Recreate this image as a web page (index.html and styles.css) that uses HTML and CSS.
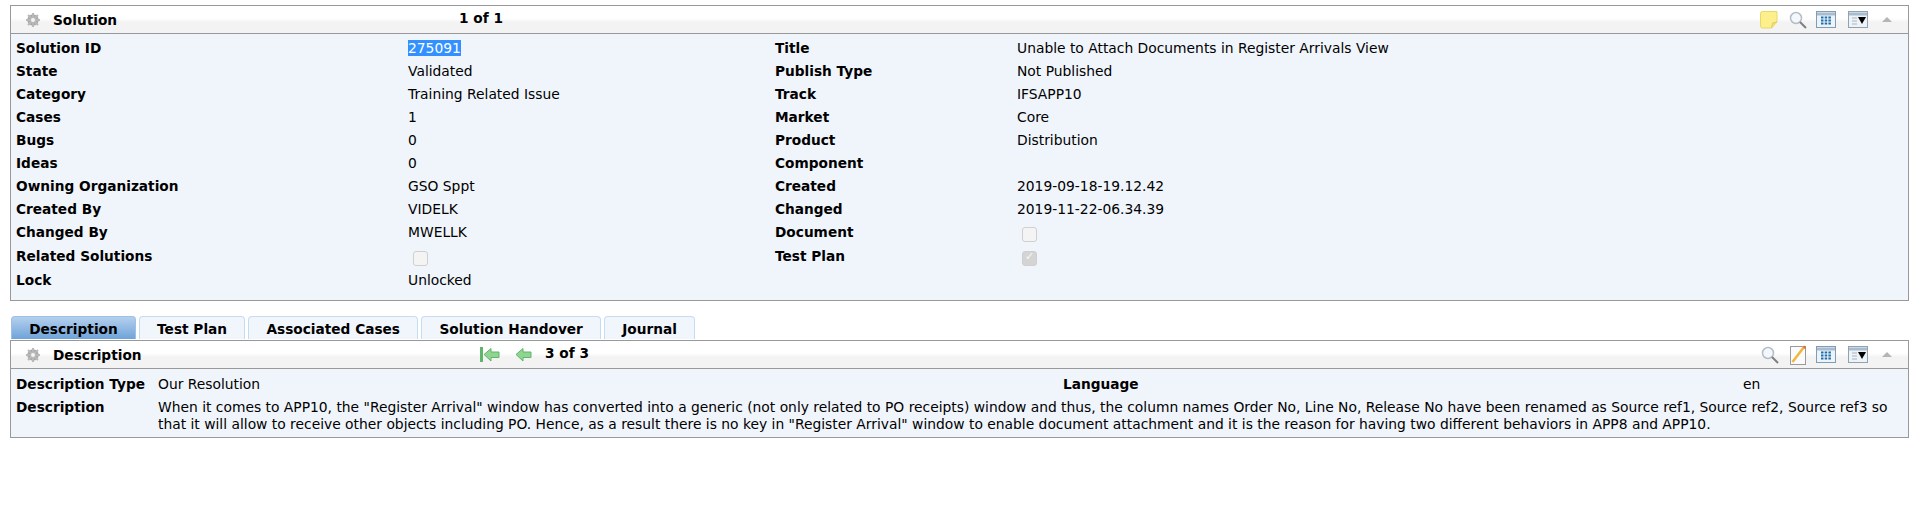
FILE: index.html
```html
<!DOCTYPE html>
<html>
<head>
    <title>Solution</title>
    <link rel="stylesheet" href="styles.css">
</head>
<body>
    <svg class="icon-defs" width="0" height="0">
        <defs>
            <g id="gear">
                <circle cx="7" cy="7" r="4.2" fill="none" stroke="#a8a8a8" stroke-width="3"/>
                <path d="M7 0v14M0 7h14M2 2l10 10M12 2L2 12" stroke="#b8b8b8" stroke-width="2"/>
                <circle cx="7" cy="7" r="2" fill="#f4f4f4"/>
            </g>
            <g id="search">
                <circle cx="7" cy="7" r="5.5" fill="#f4f8fc" stroke="#b4bcc6" stroke-width="1.5"/>
                <path d="M11 11l6 6" stroke="#7b7f85" stroke-width="2"/>
            </g>
            <g id="table">
                <rect x=".5" y=".5" width="19" height="16" fill="#eef3f8" stroke="#7f9db9"/>
                <path d="M1 3h18" stroke="#a9bccd" stroke-width="3"/>
                <path d="M5 6.500h10M5 9.500h10M5 12.500h10" stroke="#1a6fb0" stroke-width="2" stroke-dasharray="2.500 1.200"/>
            </g>
            <g id="window">
                <rect x=".5" y=".5" width="19" height="16" fill="#eef3f8" stroke="#8ea3b5"/>
                <path d="M1 3h18" stroke="#a9bccd" stroke-width="3"/>
                <path d="M4 7h5M4 10h5M4 13h5" stroke="#a9b4bf"/>
                <path d="M10 6h8l-4 7z" fill="#000"/>
            </g>
            <path id="arrow" d="M.5 6.500l7-6v3.500h8v5.500h-8v3.500z" fill="#8fd58f" stroke="#5fb56a"/>
        </defs>
    </svg>

    <div class="panel">
        <div class="panel-head">
            <svg class="gear" width="14" height="14"><use href="#gear"/></svg>
            <span class="panel-title title-solution">Solution</span>
            <span class="counter">1 of 1</span>
            <div class="tools">
                <svg class="tool tool-note" width="18" height="18">
                    <path d="M.5 2.500Q.5.500 2.500.500H17V11l-5.500 6H2.500Q.5 17 .5 15z" fill="#fdf08c" stroke="#e8d868"/>
                    <path d="M11.500 17l1-5 4.500-1" fill="#f3df6c" stroke="#e0cc60"/>
                </svg>
                <svg class="tool tool-search" width="18" height="18"><use href="#search"/></svg>
                <svg class="tool tool-table" width="20" height="17"><use href="#table"/></svg>
                <svg class="tool tool-window" width="20" height="17"><use href="#window"/></svg>
                <span class="collapse"></span>
            </div>
        </div>
        <div class="fields">
            <div class="label">Solution ID</div><div class="value"><span class="selected">275091</span></div>
            <div class="label">Title</div><div class="value">Unable to Attach Documents in Register Arrivals View</div>

            <div class="label">State</div><div class="value">Validated</div>
            <div class="label">Publish Type</div><div class="value">Not Published</div>

            <div class="label">Category</div><div class="value">Training Related Issue</div>
            <div class="label">Track</div><div class="value">IFSAPP10</div>

            <div class="label">Cases</div><div class="value">1</div>
            <div class="label">Market</div><div class="value">Core</div>

            <div class="label">Bugs</div><div class="value">0</div>
            <div class="label">Product</div><div class="value">Distribution</div>

            <div class="label">Ideas</div><div class="value">0</div>
            <div class="label">Component</div><div class="value"></div>

            <div class="label">Owning Organization</div><div class="value">GSO Sppt</div>
            <div class="label">Created</div><div class="value">2019-09-18-19.12.42</div>

            <div class="label">Created By</div><div class="value">VIDELK</div>
            <div class="label">Changed</div><div class="value">2019-11-22-06.34.39</div>

            <div class="label">Changed By</div><div class="value">MWELLK</div>
            <div class="label">Document</div><div class="value"><input type="checkbox" disabled></div>

            <div class="label">Related Solutions</div><div class="value"><input type="checkbox" disabled></div>
            <div class="label">Test Plan</div><div class="value"><input type="checkbox" disabled checked></div>

            <div class="label">Lock</div><div class="value">Unlocked</div>
            <div class="label"></div><div class="value"></div>
        </div>
    </div>

    <div class="tabs">
        <div class="tab active">Description</div>
        <div class="tab">Test Plan</div>
        <div class="tab">Associated Cases</div>
        <div class="tab">Solution Handover</div>
        <div class="tab">Journal</div>
    </div>

    <div class="panel">
        <div class="panel-head">
            <svg class="gear" width="14" height="14"><use href="#gear"/></svg>
            <span class="panel-title title-description">Description</span>
            <svg class="nav nav-first" width="20" height="16">
                <path d="M1.500 0v15" stroke="#5fb56a" stroke-width="3"/>
                <use href="#arrow" x="3.500" y="1"/>
            </svg>
            <svg class="nav nav-prev" width="17" height="16"><use href="#arrow" x="0.500" y="1"/></svg>
            <span class="counter">3 of 3</span>
            <div class="tools">
                <svg class="tool tool-search2" width="18" height="18"><use href="#search"/></svg>
                <svg class="tool tool-edit" width="17" height="20">
                    <rect x=".5" y="1.500" width="15" height="18" fill="#fbfbfb" stroke="#9a9a9a"/>
                    <path d="M2.500 17L14 2" stroke="#f2b63c" stroke-width="2.500"/>
                    <path d="M14 .5l2 1.500-1 2-2-1.500z" fill="#e2703a"/>
                </svg>
                <svg class="tool tool-table" width="20" height="17"><use href="#table"/></svg>
                <svg class="tool tool-window" width="20" height="17"><use href="#window"/></svg>
                <span class="collapse"></span>
            </div>
        </div>
        <div class="desc-fields">
            <div class="label">Description Type</div>
            <div class="value desc-type">Our Resolution</div>
            <div class="label lang-label">Language</div>
            <div class="value">en</div>
            <div class="label">Description</div>
            <div class="value desc-text">When it comes to APP10, the "Register Arrival" window has converted into a generic (not only related to PO receipts) window and thus, the column names Order No, Line No, Release No have been renamed as Source ref1, Source ref2, Source ref3 so that it will allow to receive other objects including PO. Hence, as a result there is no key in "Register Arrival" window to enable document attachment and it is the reason for having two different behaviors in APP8 and APP10.</div>
        </div>
    </div>
</body>
</html>
```

FILE: styles.css
```css
body {
    font-family: "DejaVu Sans", Verdana, sans-serif;
    font-size: 13.85px;
    line-height: 17px;
    color: #000;
    background: #fff;
    margin: 5px 10px 0;
}
.icon-defs {
    position: absolute;
}
.panel {
    border: 1px solid #999;
    background-color: #f0f5fc;
}
.panel-head {
    display: flex;
    align-items: center;
    height: 27px;
    border-bottom: 1px solid #999;
    background: linear-gradient(#fff 0, #fff 45%, #f3f3f3 60%, #f3f3f3 100%);
}
.gear {
    margin-left: 15px;
    flex: none;
}
.panel-title {
    font-weight: bold;
    font-size: 13.7px;
    margin-left: 13px;
    flex: none;
    position: relative;
    top: 1px;
}
.title-solution {
    width: 406px;
}
.title-description {
    width: 427px;
}
.counter {
    font-weight: bold;
    font-size: 13.7px;
    position: relative;
    top: -1px;
}
.nav-prev {
    margin-left: 15px;
    margin-right: 13px;
}
.tools {
    margin-left: auto;
    display: flex;
    align-items: center;
    padding-right: 16px;
}
.tool {
    display: block;
    flex: none;
}
.tool-note {
    margin-right: 11px;
}
.tool-search {
    margin-right: 9px;
}
.tool-search2 {
    margin-right: 11px;
}
.tool-edit {
    margin-right: 9px;
}
.tool-table {
    margin-right: 12px;
}
.tool-window {
    margin-right: 14px;
}
.collapse {
    width: 0;
    height: 0;
    border-left: 5px solid transparent;
    border-right: 5px solid transparent;
    border-bottom: 5px solid #b5b5b5;
}
.fields {
    display: grid;
    grid-template-columns: 392px 367px 242px 1fr;
    padding: 3px 5px 8px;
}
.fields > div {
    padding: 3px 0;
    min-height: 17px;
}
.label {
    font-weight: bold;
    font-size: 13.7px;
}
.selected {
    background-color: #3390ff;
    color: #fff;
}
input[type="checkbox"] {
    appearance: none;
    display: block;
    width: 15px;
    height: 15px;
    margin: 3px 0 0 5px;
    border: 1px solid #cfcfcf;
    border-radius: 3px;
    background-color: #f4f4f4;
    position: relative;
}
input[type="checkbox"]:checked {
    background-color: #d4d4d4;
}
input[type="checkbox"]:checked::after {
    content: "\2713";
    position: absolute;
    left: 2px;
    top: -2px;
    font-size: 11px;
    color: #f8f8f8;
}
.tabs {
    display: flex;
    gap: 3px;
    margin-top: 15px;
    padding-left: 1px;
    height: 24px;
}
.tab {
    padding: 3px 17.200px 0;
    font-weight: bold;
    font-size: 13.7px;
    background-color: #f1f6fd;
    border: 1px solid #c6dcf3;
    border-bottom: none;
    border-radius: 4px 4px 0 0;
    box-sizing: border-box;
    height: 23px;
    line-height: 18px;
}
.tab.active {
    background: linear-gradient(#b5d0ee, #6ea3d9);
    border-color: #9cc0e6;
}
.desc-fields {
    display: grid;
    grid-template-columns: 142px 905px 680px 1fr;
    padding: 7px 5px 4px;
    row-gap: 6px;
}
.desc-text {
    grid-column: 2 / 5;
}
```
